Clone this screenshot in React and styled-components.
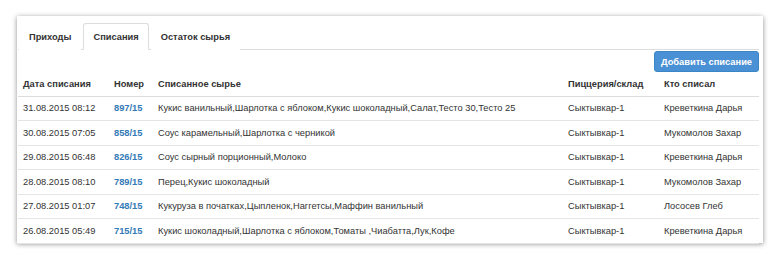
import React from 'react';
import styled, { createGlobalStyle } from 'styled-components';

const GlobalStyle = createGlobalStyle`
    html, body {
        margin: 0;
        padding: 0;
        background: #fff;
    }
    body {
        font-family: "Liberation Sans", Arial, sans-serif;
        font-size: 9.3px;
        color: #333;
    }
`;

const Page = styled.div`
    padding: 16px 0 0 17px;
    width: 780px;
    height: 258px;
    box-sizing: border-box;
`;

const Card = styled.div`
    width: 746px;
    height: 227px;
    background: #fff;
    box-shadow: 0 1px 5px rgba(0, 0, 0, 0.45);
    padding: 7px 4px 0 1px;
    box-sizing: border-box;
`;

const Tabs = styled.ul`
    display: flex;
    list-style: none;
    margin: 0;
    padding: 0 0 0 1px;
    border-bottom: 1px solid #ddd;
`;

const Tab = styled.li`
    margin: 0 2px -1px 0;
    padding: 0 9px;
    height: 27px;
    line-height: 26px;
    font-weight: bold;
    color: #333;
    box-sizing: border-box;
    border: 1px solid ${p => (p.$active ? '#ddd' : 'transparent')};
    border-bottom-color: ${p => (p.$active ? '#fff' : 'transparent')};
    border-radius: 3px 3px 0 0;
    background: #fff;
`;

const Toolbar = styled.div`
    display: flex;
    justify-content: flex-end;
    padding-top: 1px;
`;

const Button = styled.button`
    height: 21px;
    width: 105px;
    padding: 0;
    border: 1px solid #3a85c6;
    border-radius: 3px;
    background: #4a90d4;
    color: #fff;
    font-family: inherit;
    font-size: 9.3px;
    font-weight: bold;
    white-space: nowrap;
`;

const Table = styled.table`
    width: 741px;
    table-layout: fixed;
    border-collapse: collapse;
`;

const Th = styled.th`
    text-align: left;
    font-weight: bold;
    height: 24px;
    padding: 0 5px;
    border-bottom: 1px solid #ddd;
    white-space: nowrap;
    box-sizing: border-box;
    width: ${p => p.$w};
`;

const Td = styled.td`
    height: 24.5px;
    padding: 0 5px;
    border-bottom: 1px solid #e5e5e5;
    white-space: nowrap;
    overflow: hidden;
    box-sizing: border-box;
`;

const Num = styled.a`
    color: #337ab7;
    font-weight: bold;
    text-decoration: none;
`;

const rows = [
    ['31.08.2015 08:12', '897/15', 'Кукис ванильный,Шарлотка с яблоком,Кукис шоколадный,Салат,Тесто 30,Тесто 25', 'Сыктывкар-1', 'Креветкина Дарья'],
    ['30.08.2015 07:05', '858/15', 'Соус карамельный,Шарлотка с черникой', 'Сыктывкар-1', 'Мукомолов Захар'],
    ['29.08.2015 06:48', '826/15', 'Соус сырный порционный,Молоко', 'Сыктывкар-1', 'Креветкина Дарья'],
    ['28.08.2015 08:10', '789/15', 'Перец,Кукис шоколадный', 'Сыктывкар-1', 'Мукомолов Захар'],
    ['27.08.2015 01:07', '748/15', 'Кукуруза в початках,Цыпленок,Наггетсы,Маффин ванильный', 'Сыктывкар-1', 'Лососев Глеб'],
    ['26.08.2015 05:49', '715/15', 'Кукис шоколадный,Шарлотка с яблоком,Томаты ,Чиабатта,Лук,Кофе', 'Сыктывкар-1', 'Креветкина Дарья'],
];

export default function App() {
    return (
        <>
            <GlobalStyle />
            <Page>
                <Card>
                    <Tabs>
                        <Tab>Приходы</Tab>
                        <Tab $active>Списания</Tab>
                        <Tab>Остаток сырья</Tab>
                    </Tabs>
                    <Toolbar>
                        <Button>Добавить списание</Button>
                    </Toolbar>
                    <Table>
                        <thead>
                            <tr>
                                <Th $w="91px">Дата списания</Th>
                                <Th $w="44px">Номер</Th>
                                <Th $w="410px">Списанное сырье</Th>
                                <Th $w="96px">Пиццерия/склад</Th>
                                <Th $w="100px">Кто списал</Th>
                            </tr>
                        </thead>
                        <tbody>
                            {rows.map(r => (
                                <tr key={r[1]}>
                                    <Td>{r[0]}</Td>
                                    <Td><Num href="#">{r[1]}</Num></Td>
                                    <Td>{r[2]}</Td>
                                    <Td>{r[3]}</Td>
                                    <Td>{r[4]}</Td>
                                </tr>
                            ))}
                        </tbody>
                    </Table>
                </Card>
            </Page>
        </>
    );
}
